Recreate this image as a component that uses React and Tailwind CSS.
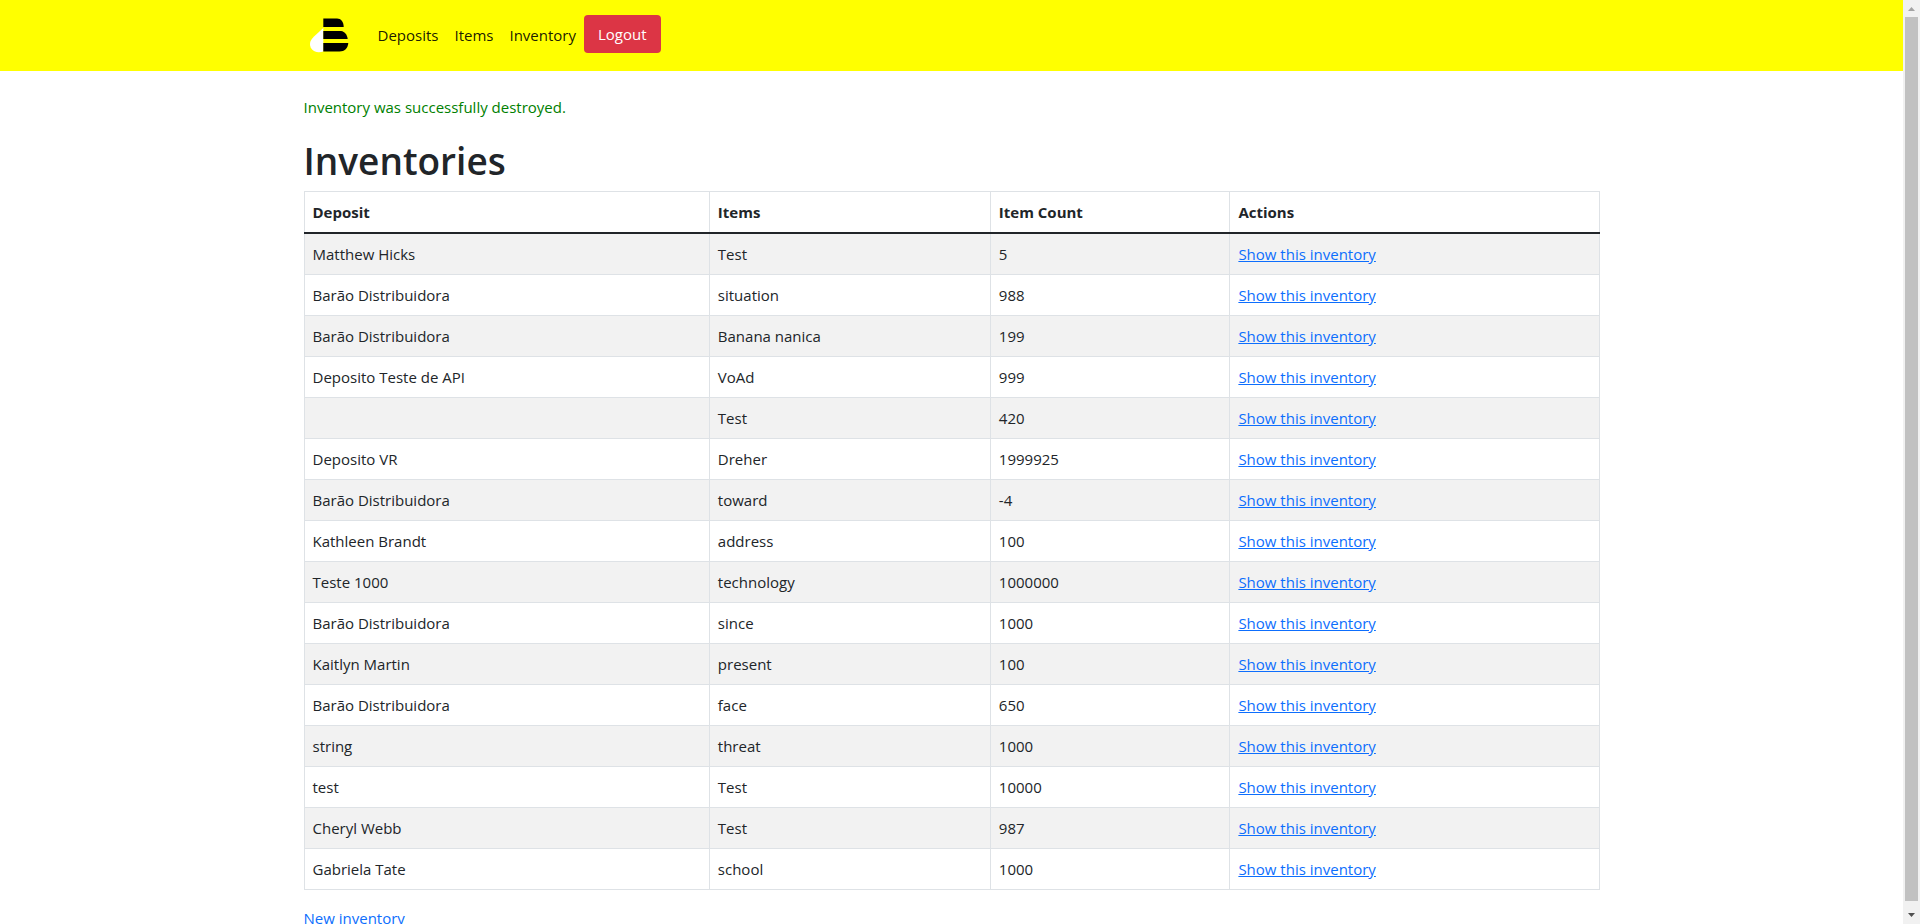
const inventories = [
  ["Matthew Hicks", "Test", "5"],
  ["Barão Distribuidora", "situation", "988"],
  ["Barão Distribuidora", "Banana nanica", "199"],
  ["Deposito Teste de API", "VoAd", "999"],
  ["", "Test", "420"],
  ["Deposito VR", "Dreher", "1999925"],
  ["Barão Distribuidora", "toward", "-4"],
  ["Kathleen Brandt", "address", "100"],
  ["Teste 1000", "technology", "1000000"],
  ["Barão Distribuidora", "since", "1000"],
  ["Kaitlyn Martin", "present", "100"],
  ["Barão Distribuidora", "face", "650"],
  ["string", "threat", "1000"],
  ["test", "Test", "10000"],
  ["Cheryl Webb", "Test", "987"],
  ["Gabriela Tate", "school", "1000"],
];

function Logo() {
  return (
    <svg viewBox="0 0 50 40" className="h-10 w-[50px]" aria-hidden="true">
      <path d="M19.300 13 V36.500 Q17 37.300 14.500 37.200 C9.500 37 6 33.500 6 29 C6 26 7.800 23.700 10 21.500 Z" fill="#fff" />
      <path d="M19.300 3.500 H33 C37 3.500 39.500 6.500 39.700 12 H19.300 Z" fill="#000" />
      <path d="M19.300 16 H37 C41 16.500 43.200 20 43.700 24 H19.300 Z" fill="#000" />
      <path d="M19.300 28 H44.300 C44 33 40.500 36.500 35.500 36.500 H19.300 Z" fill="#000" />
    </svg>
  );
}

function Navbar() {
  return (
    <header className="bg-[#ffff00]">
      <nav className="mx-auto flex max-w-[1320px] items-start px-3 pt-[15px] pb-4">
        <a href="#" aria-label="Home" className="mr-4">
          <Logo />
        </a>
        <ul className="flex text-black/90">
          <li><a href="#deposits" className="block px-2 py-2">Deposits</a></li>
          <li><a href="#items" className="block px-2 py-2">Items</a></li>
          <li><a href="#inventory" className="block px-2 py-2">Inventory</a></li>
        </ul>
        <button type="button" className="h-[38px] rounded bg-[#dc3545] px-[14px] text-white">
          Logout
        </button>
      </nav>
    </header>
  );
}

function ScrollRail() {
  return (
    <div className="flex h-full w-[17px] shrink-0 flex-col items-center bg-[#f1f1f1]" aria-hidden="true">
      <svg viewBox="0 0 17 17" className="size-[17px] shrink-0">
        <path d="M5 11 L8.500 7 L12 11 Z" fill="#a3a3a3" />
      </svg>
      <div className="w-[13px] flex-1 bg-[#c1c1c1]" />
      <svg viewBox="0 0 17 23" className="h-[23px] w-[17px] shrink-0">
        <path d="M5 12 L8.500 16 L12 12 Z" fill="#505050" />
      </svg>
    </div>
  );
}

export default function App() {
  return (
    <div className="flex h-screen overflow-hidden bg-white font-['Open_Sans','Noto_Sans',sans-serif] text-[15px] leading-6 text-[#212529]">
      <div className="min-w-0 flex-1 overflow-hidden">
        <Navbar />
        <main className="mx-auto max-w-[1320px] px-3 pt-6">
          <p className="mb-4 text-[#008000]">Inventory was successfully destroyed.</p>
          <h1 className="mb-1 text-[37px] leading-[52px] font-semibold">Inventories</h1>
          <table className="mb-4 w-full table-fixed border-collapse">
            <colgroup>
              <col className="w-[31.3%]" />
              <col className="w-[21.7%]" />
              <col className="w-[18.5%]" />
              <col />
            </colgroup>
            <thead>
              <tr className="text-left">
                {["Deposit", "Items", "Item Count", "Actions"].map((title) => (
                  <th key={title} scope="col" className="border border-[#dee2e6] border-b-2 border-b-[#212529] p-2 font-bold">
                    {title}
                  </th>
                ))}
              </tr>
            </thead>
            <tbody>
              {inventories.map(([deposit, item, count], index) => (
                <tr key={index} className="h-[41px] odd:bg-[#f2f2f2]">
                  <td className="border border-[#dee2e6] p-2">{deposit}</td>
                  <td className="border border-[#dee2e6] p-2">{item}</td>
                  <td className="border border-[#dee2e6] p-2">{count}</td>
                  <td className="border border-[#dee2e6] p-2">
                    <a href="#show" className="text-[#0d6efd] underline">Show this inventory</a>
                  </td>
                </tr>
              ))}
            </tbody>
          </table>
          <a href="#new" className="text-[#0d6efd] underline">New inventory</a>
        </main>
      </div>
      <ScrollRail />
    </div>
  );
}
